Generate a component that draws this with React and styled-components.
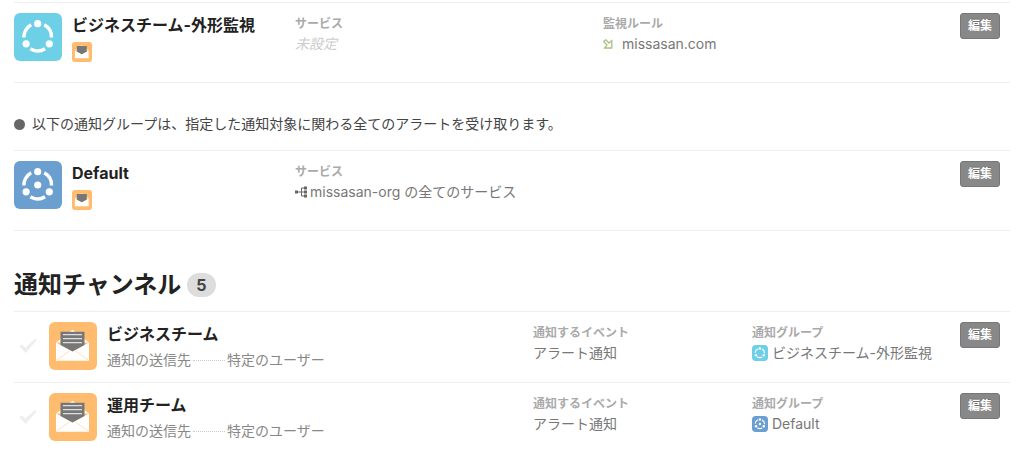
import React from "react";
import styled, { createGlobalStyle } from "styled-components";

const GlobalStyle = createGlobalStyle`
  *, *::before, *::after { box-sizing: border-box; }
  body {
    margin: 0;
    background: #fff;
    color: #222;
    font-family: Inter, "Noto Sans CJK JP", sans-serif;
    font-size: 14px;
    line-height: 20px;
  }
  ul, h2, h3, p, dl, dd { margin: 0; padding: 0; }
  ul { list-style: none; }
`;

const Page = styled.main`
  padding: 2px 14px 0;
`;

const List = styled.ul`
  border-bottom: ${(p) => (p.$closed ? "1px solid #eee" : "none")};
`;

const Row = styled.li`
  display: grid;
  align-items: start;
  border-top: 1px solid #eee;
`;

const GroupRow = styled(Row)`
  grid-template-columns: 281fr 308fr 357fr auto;
  padding: 10px 10px 20px 0;
`;

const ChannelRow = styled(Row)`
  grid-template-columns: 519fr 219fr 208fr auto;
  padding: 10px 10px 12px 0;
`;

const Identity = styled.div`
  display: flex;
  gap: 10px;
`;

const CheckSlot = styled.div`
  display: flex;
  align-items: center;
  width: 25px;
  padding-left: 5px;
`;

const Name = styled.h3`
  font-size: 16px;
  line-height: 24px;
  font-weight: 700;
`;

const Stack = styled.div`
  display: flex;
  flex-direction: column;
  gap: ${(p) => p.$gap}px;
`;

const Target = styled.p`
  display: flex;
  align-items: center;
  color: #888;
`;

const Leader = styled.span`
  width: 32px;
  margin: 0 2px;
  border-top: 1px dotted #ccc;
`;

const Label = styled.dt`
  color: #aaa;
  font-size: 12px;
  line-height: 22px;
  font-weight: 700;
`;

const Value = styled.dd`
  display: flex;
  align-items: center;
  gap: ${(p) => p.$gap || 4}px;
  color: ${(p) => (p.$empty ? "#ccc" : "#777")};
  font-style: ${(p) => (p.$empty ? "italic" : "normal")};
  line-height: 18px;
`;

const EditButton = styled.button`
  grid-column: 4;
  width: 40px;
  height: 26px;
  padding: 0;
  border: 1px solid #777;
  border-radius: 3px;
  background: #888;
  color: #fff;
  font: 700 12px/20px Inter, "Noto Sans CJK JP", sans-serif;
  text-shadow: 0 -1px 0 rgba(0, 0, 0, 0.2);
`;

const Note = styled.p`
  display: flex;
  align-items: center;
  gap: 7px;
  padding: 31px 0 16px;
  color: #444;
`;

const Dot = styled.span`
  width: 11px;
  height: 11px;
  border-radius: 50%;
  background: #666;
`;

const SectionTitle = styled.h2`
  display: flex;
  align-items: center;
  gap: 6px;
  padding: 38px 0 10px;
  font-size: 24px;
  line-height: 32px;
  font-weight: 700;
`;

const Count = styled.span`
  padding: 0 9px;
  border-radius: 12px;
  background: #ddd;
  color: #444;
  font-size: 16px;
  line-height: 24px;
`;

const Icon = styled.svg`
  display: block;
  flex: none;
`;

const GroupIcon = ({ size = 48, core = false }) => (
  <Icon width={size} height={size} viewBox="0 0 48 48" aria-hidden="true">
    <rect width="48" height="48" rx={size < 20 ? 11 : 6} fill={core ? "#6a9fd0" : "#6dd0e7"} />
    <circle
      cx="23.7" cy="24" r="13.8" fill="none" stroke="#fff" strokeWidth="3.4"
      pathLength="360" strokeDasharray="64 56" transform="rotate(-62 23.7 24)"
    />
    <circle cx="23.7" cy="10.7" r="3.6" fill="#fff" />
    <circle cx="12.1" cy="30.8" r="3.6" fill="#fff" />
    <circle cx="35.3" cy="30.8" r="3.6" fill="#fff" />
    {core && <circle cx="23.7" cy="24" r="3.6" fill="#fff" />}
  </Icon>
);

const MailIcon = ({ size = 48 }) => (
  <Icon width={size} height={size} viewBox="0 0 48 48" aria-hidden="true">
    <rect width="48" height="48" rx={size < 48 ? 7 : 6} fill="#ffbc6e" />
    <path d="M7 20.5 23.5 7.8 40 20.5Z" fill="#fff" />
    <path d="M7 20.5 23.5 29.3 40 20.5V38.8H7Z" fill="#fff" />
    <path d="M11.5 9.8h24v13.1l-12 6.6-12-6.6Z" fill="#777" />
    {size === 48 && (
      <>
        <path d="M14 12.7h19M14 16.7h19M14 20.7h19" stroke="#ddd" strokeWidth="1.3" />
        <path d="M7 38.5 20.5 29M40 38.5 26.5 29" stroke="#ffdcb4" strokeWidth="0.9" />
      </>
    )}
  </Icon>
);

const CheckIcon = () => (
  <Icon width="18" height="14" viewBox="0 0 54 43" aria-hidden="true">
    <path d="M0 22 8 16 19 27 48 0 54 3 20 43Z" fill="#eee" />
  </Icon>
);

const ArrowIcon = () => (
  <Icon width="10" height="10" viewBox="0 0 10 10" aria-hidden="true">
    <path
      d="M.8 2.6 2.8.8 6 4 8.8 1.6V9H1.6L4 6Z"
      fill="none" stroke="#a9c27f" strokeWidth="1.3"
    />
  </Icon>
);

const TreeIcon = () => (
  <Icon width="12" height="12" viewBox="0 0 12 12" aria-hidden="true">
    <path d="M2 6h8M10 2H6.5v8H10" fill="none" stroke="#666" strokeWidth="1" />
    <path d="M0 4.5h3v3H0ZM9 .5h3v3H9ZM9 4.5h3v3H9ZM9 8.5h3v3H9Z" fill="#666" />
  </Icon>
);

const Field = ({ label, children, ...rest }) => (
  <dl>
    <Label>{label}</Label>
    <Value {...rest}>{children}</Value>
  </dl>
);

const Channel = ({ name, group, core }) => (
  <ChannelRow>
    <Identity>
      <CheckSlot><CheckIcon /></CheckSlot>
      <MailIcon />
      <Stack $gap={4}>
        <Name>{name}</Name>
        <Target>通知の送信先<Leader />特定のユーザー</Target>
      </Stack>
    </Identity>
    <Field label="通知するイベント">アラート通知</Field>
    <Field label="通知グループ">
      <GroupIcon size={16} core={core} />
      {group}
    </Field>
    <EditButton type="button">編集</EditButton>
  </ChannelRow>
);

const Group = ({ name, core, children }) => (
  <GroupRow>
    <Identity>
      <GroupIcon core={core} />
      <Stack $gap={5}>
        <Name>{name}</Name>
        <MailIcon size={20} />
      </Stack>
    </Identity>
    {children}
    <EditButton type="button">編集</EditButton>
  </GroupRow>
);

export default function App() {
  return (
    <>
      <GlobalStyle />
      <Page>
        <List $closed>
          <Group name="ビジネスチーム-外形監視">
            <Field label="サービス" $empty>未設定</Field>
            <Field label="監視ルール" $gap={9}>
              <ArrowIcon />
              missasan.com
            </Field>
          </Group>
        </List>
        <Note>
          <Dot />
          以下の通知グループは、指定した通知対象に関わる全てのアラートを受け取ります。
        </Note>
        <List $closed>
          <Group name="Default" core>
            <Field label="サービス" $gap={3}>
              <TreeIcon />
              missasan-org の全てのサービス
            </Field>
          </Group>
        </List>
        <SectionTitle>
          通知チャンネル
          <Count>5</Count>
        </SectionTitle>
        <List>
          <Channel name="ビジネスチーム" group="ビジネスチーム-外形監視" />
          <Channel name="運用チーム" group="Default" core />
        </List>
      </Page>
    </>
  );
}
